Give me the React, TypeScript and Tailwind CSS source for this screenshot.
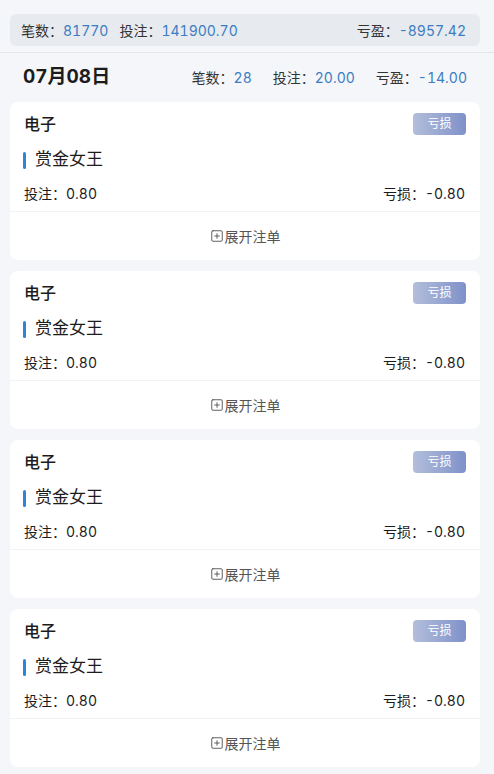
import { SquarePlus } from 'lucide-react';

const FONT = { fontFamily: 'Inter, "Noto Sans CJK SC", sans-serif' };

const CARDS = [1, 2, 3, 4].map(id => ({ id, type: '电子', game: '赏金女王', bet: '0.80', loss: '-0.80' }));

function Stat({ label, value }: { label: string; value: string }) {
  return (
    <span className="text-[14px] text-[#333]">
      {label}：<span className="text-[#3b7dc0]">{value}</span>
    </span>
  );
}

export default function App() {
  return (
    <div style={FONT} className="min-h-[774px] w-[494px] bg-[#f4f6fa] text-[#1c1c1e] tabular-nums">
      <div className="pl-[10px] pr-[14px] pt-[14px] pb-[6px] border-b border-[#e3e6eb]">
        <div className="h-[32px] rounded-[6px] bg-[#e7eaef] px-[11px] flex items-center">
          <Stat label="笔数" value="81770" />
          <span className="ml-[11px]"><Stat label="投注" value="141900.70" /></span>
          <span className="ml-auto pr-[3px]"><Stat label="亏盈" value="-8957.42" /></span>
        </div>
      </div>

      <div className="h-[49px] pl-[23px] pr-[27px] flex items-center">
        <span className="text-[19px] font-bold">07月08日</span>
        <div className="ml-auto flex items-center gap-[21px]">
          <Stat label="笔数" value="28" />
          <Stat label="投注" value="20.00" />
          <Stat label="亏盈" value="-14.00" />
        </div>
      </div>

      <div className="pl-[10px] pr-[14px] flex flex-col gap-[11px] pb-[8px]">
        {CARDS.map(c => (
          <div key={c.id} className="bg-white rounded-[8px] h-[158px] flex flex-col">
            <div className="pl-[14px] pr-[15px] pt-[11px] pb-[8px] border-b border-[#f1f3f6]">
              <div className="h-[22px] flex items-center justify-between">
                <span className="text-[16px] font-medium">{c.type}</span>
                <span className="h-[22px] w-[53px] -mr-[1px] rounded-[4px] bg-gradient-to-r from-[#b3bedb] to-[#7f91c9] text-white text-[12px] flex items-center justify-center">
                  亏损
                </span>
              </div>
              <div className="mt-[13px] h-[24px] flex items-center">
                <span className="w-[3px] h-[17px] rounded-full bg-[#2f84d6] mr-[9px] -ml-[1px]" />
                <span className="text-[17px]">{c.game}</span>
              </div>
              <div className="mt-[11px] h-[20px] flex items-center justify-between text-[14px]">
                <span>投注：{c.bet}</span>
                <span>亏损：{c.loss}</span>
              </div>
            </div>
            <div className="flex-1 flex items-center justify-center text-[14px] text-[#555]">
              <SquarePlus size={14} strokeWidth={1.6} className="mr-[1px]" />
              展开注单
            </div>
          </div>
        ))}
      </div>
    </div>
  );
}
